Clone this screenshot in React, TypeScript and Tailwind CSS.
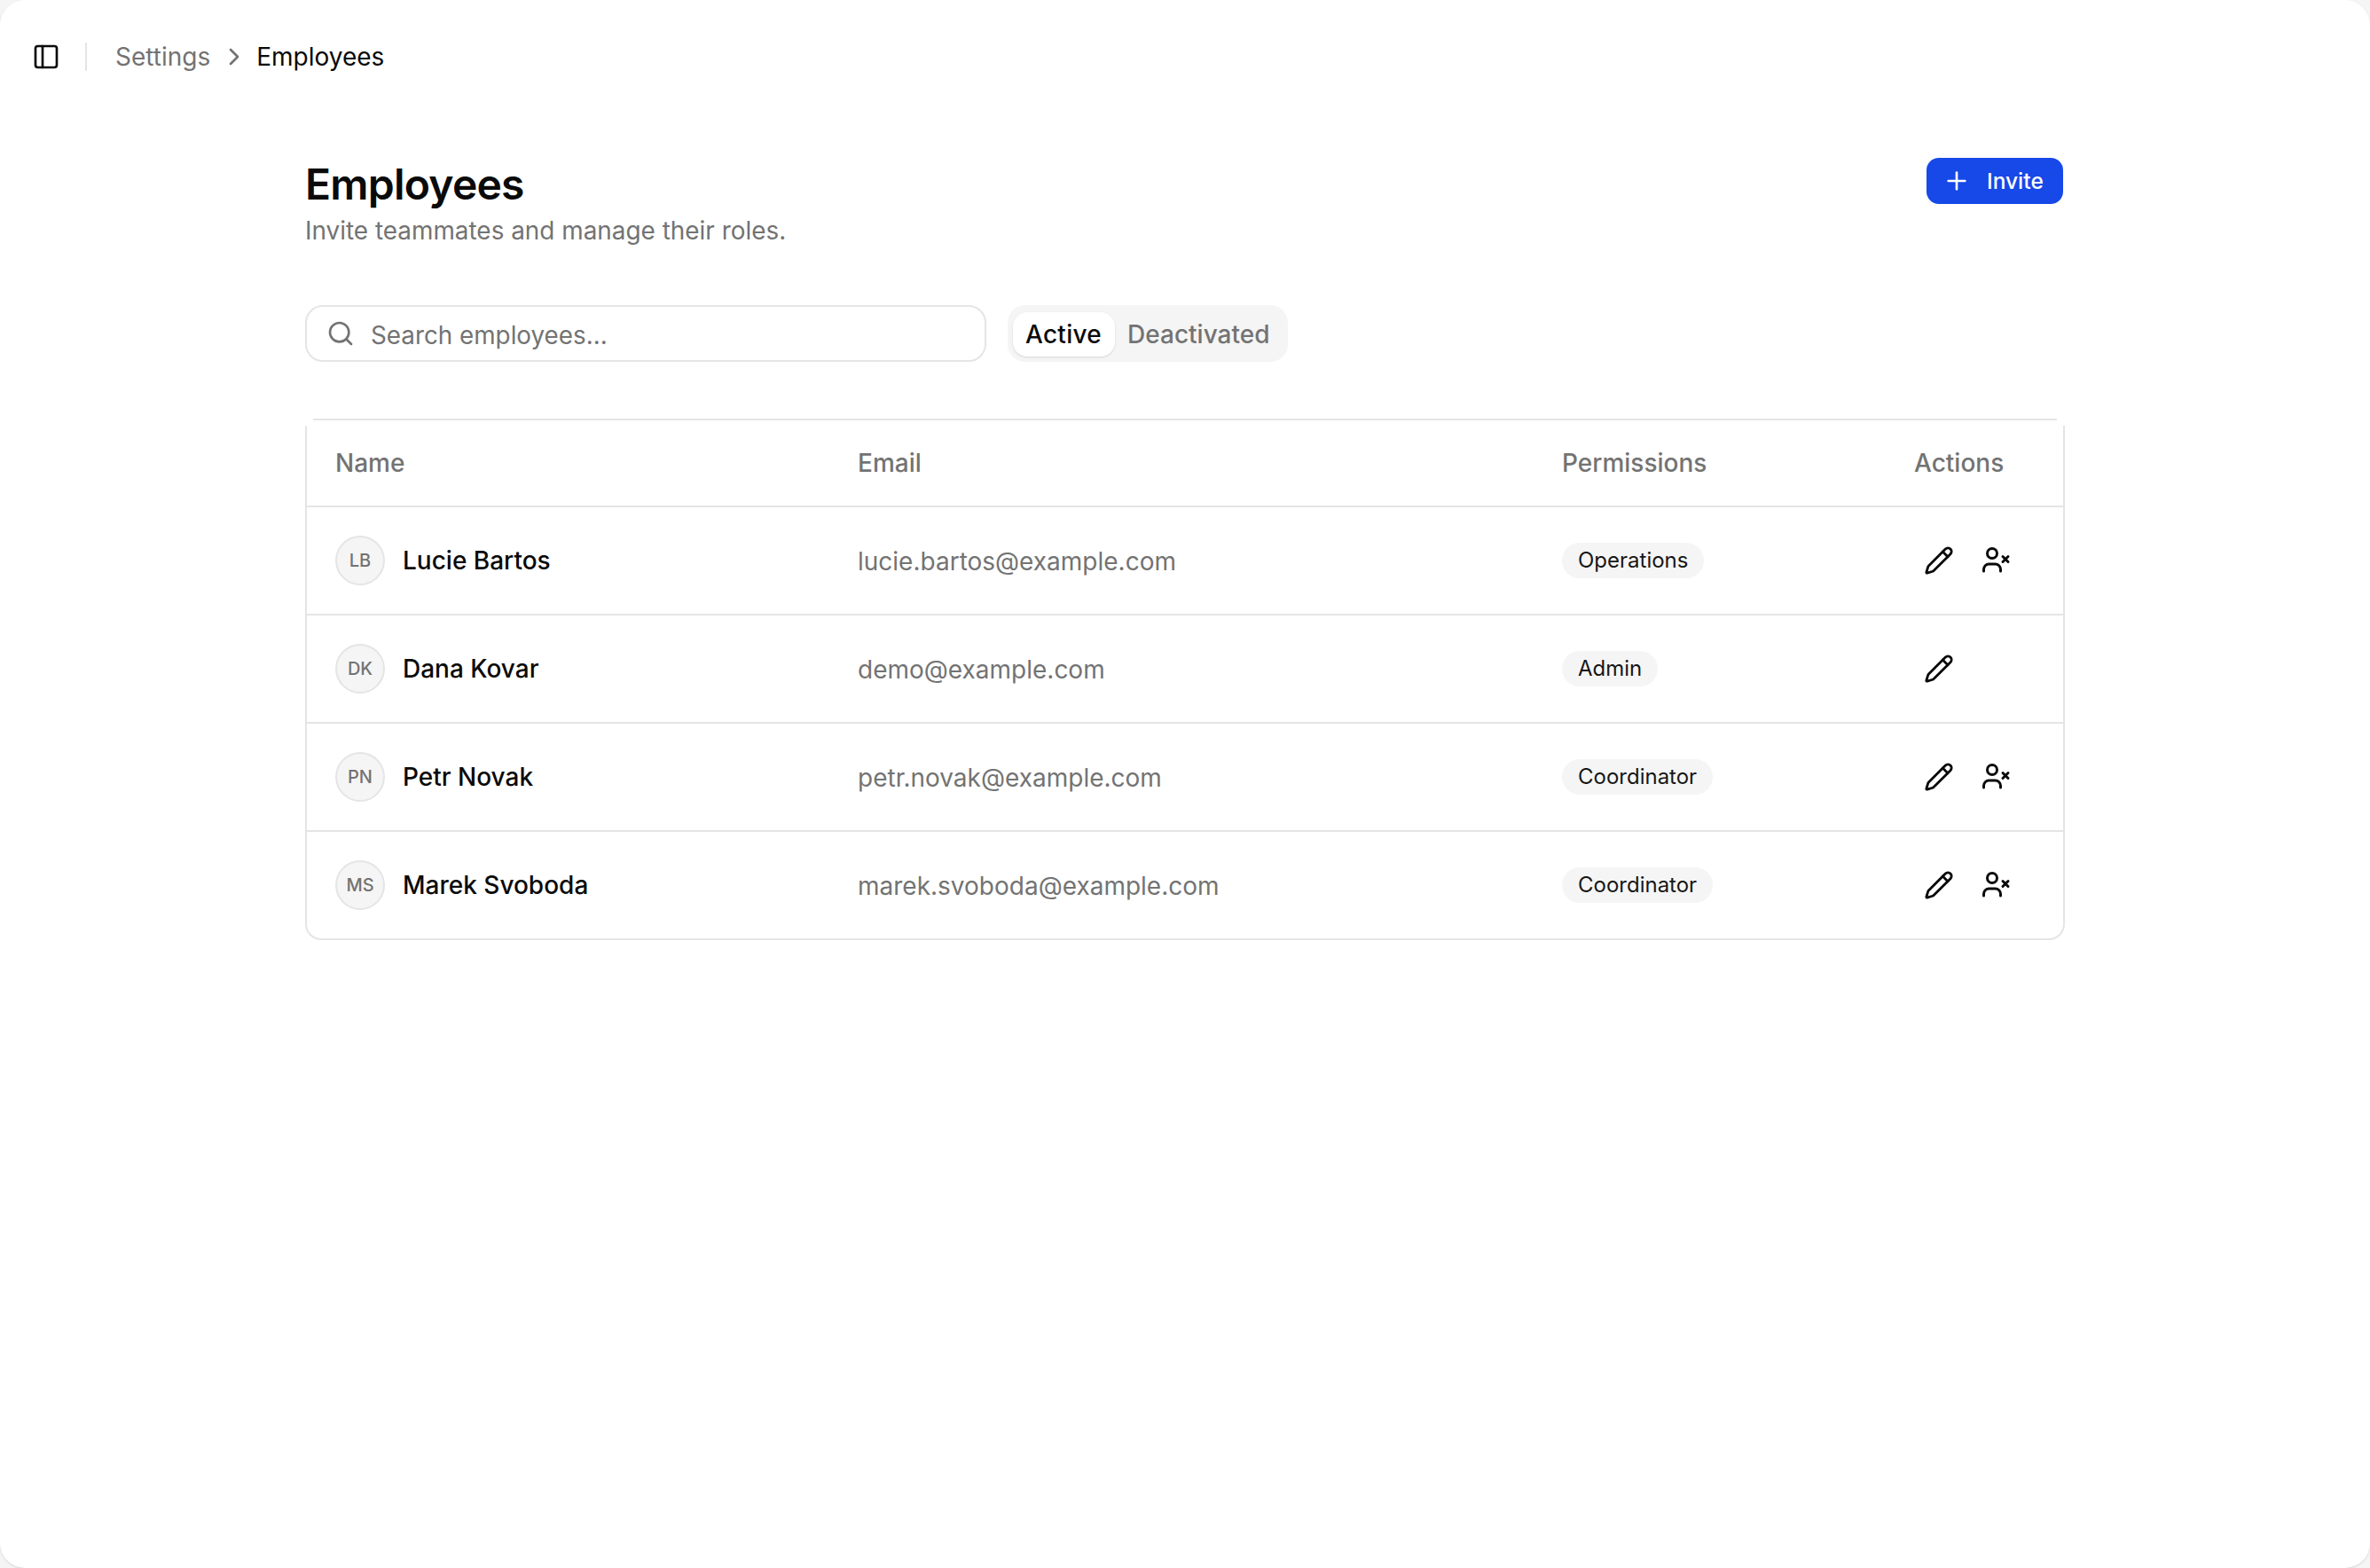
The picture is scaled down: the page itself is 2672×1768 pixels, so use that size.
import React from 'react';
import { ChevronRight, PanelLeft, Pencil, Plus, Search } from 'lucide-react';

const employees = [
  { initials: 'LB', name: 'Lucie Bartos', email: 'lucie.bartos@example.com', role: 'Operations', removable: true },
  { initials: 'DK', name: 'Dana Kovar', email: 'demo@example.com', role: 'Admin', removable: false },
  { initials: 'PN', name: 'Petr Novak', email: 'petr.novak@example.com', role: 'Coordinator', removable: true },
  { initials: 'MS', name: 'Marek Svoboda', email: 'marek.svoboda@example.com', role: 'Coordinator', removable: true },
];

function UserRemove() {
  return (
    <svg width="36" height="36" viewBox="0 0 36 36" fill="none" stroke="currentColor" strokeWidth="3" strokeLinecap="round" strokeLinejoin="round">
      <circle cx="14" cy="10" r="5.5" />
      <path d="M4.5 30v-2a6 6 0 0 1 6-6h7a6 6 0 0 1 6 6v2" />
      <path d="M26 13.5l6 6M32 13.5l-6 6" />
    </svg>
  );
}

function EmployeeRow({ employee, last }: any) {
  return (
    <div className={`grid grid-cols-[589px_794px_398px_1fr] items-center ${last ? 'h-[120px]' : 'h-[122px] border-b-2 border-[#e5e5e5]'}`}>
      <div className="flex items-center gap-5 pl-8">
        <div className="flex items-center justify-center w-14 h-14 rounded-full border-2 border-[#e5e5e5] bg-[#f5f5f5] text-[20px] font-medium text-[#737373]">
          {employee.initials}
        </div>
        <span className="text-[28px] font-[450] text-[#0a0a0a]">{employee.name}</span>
      </div>
      <div className="pl-8 pt-[1px] text-[28px] text-[#737373]">{employee.email}</div>
      <div className="pl-8">
        <span className="inline-flex items-center h-10 px-[18px] rounded-full bg-[#f5f5f5] text-[24px] font-[430] text-[#171717]">
          {employee.role}
        </span>
      </div>
      <div className="flex items-center gap-3 pl-[33px] text-[#0a0a0a]">
        <button className="flex items-center justify-center w-[52px] h-[52px]">
          <Pencil size={34} strokeWidth={2} />
        </button>
        {employee.removable && (
          <button className="flex items-center justify-center w-[52px] h-[52px]">
            <UserRemove />
          </button>
        )}
      </div>
    </div>
  );
}

export default function App() {
  return (
    <div className="min-h-[1768px] bg-[#f5f5f5] font-['Inter',sans-serif]">
      <div className="min-h-[1768px] bg-white rounded-[28px] shadow-sm">
        <header className="flex items-center h-[128px] pl-[36px]">
          <PanelLeft size={32} strokeWidth={2} className="text-[#0a0a0a]" />
          <div className="w-[2px] h-8 ml-[28px] mr-[32px] bg-[#e5e5e5]" />
          <span className="text-[28px] text-[#737373]">Settings</span>
          <ChevronRight size={32} strokeWidth={2} className="ml-[11px] mr-[9px] text-[#737373]" />
          <span className="text-[28px] text-[#0a0a0a]">Employees</span>
        </header>

        <main className="w-[1984px] mx-auto pt-[48px]">
          <div className="flex items-start justify-between">
            <div>
              <h1 className="text-[48px] leading-[64px] font-semibold tracking-[-0.016em] text-[#0a0a0a]">Employees</h1>
              <p className="text-[27.9px] leading-[40px] text-[#737373]">Invite teammates and manage their roles.</p>
            </div>
            <button className="flex items-center gap-[18px] h-[52px] w-[154px] pl-[18px] mt-[2px] mr-[2px] rounded-[14px] bg-[#1748e8] text-[24.5px] font-medium text-white">
              <Plus size={32} strokeWidth={2} />
              Invite
            </button>
          </div>

          <div className="flex items-center gap-6 mt-[64px]">
            <div className="flex items-center gap-[18px] w-[768px] h-[64px] pl-[22px] rounded-[20px] border-2 border-[#e5e5e5] text-[#737373]">
              <Search size={32} strokeWidth={2} />
              <input className="flex-1 pt-[6px] bg-transparent text-[27.8px] outline-none placeholder:text-[#737373]" placeholder="Search employees..." />
            </div>
            <div className="flex items-center w-[316px] h-[64px] pt-[2px] pl-[6px] rounded-[20px] bg-[#f5f5f5]">
              <div className="flex items-center h-[50px] pl-[14px] pr-[15px] rounded-[16px] bg-white shadow-sm text-[28px] font-medium tracking-[0.01em] text-[#0a0a0a]">Active</div>
              <div className="pl-[14px] text-[28px] font-medium text-[#737373]">Deactivated</div>
            </div>
          </div>

          <div className="relative mt-[64px] rounded-b-[18px] border-2 border-[#e5e5e5] bg-white">
            <div className="absolute -top-[2px] -left-[2px] w-[9px] h-[8px] bg-white" />
            <div className="absolute -top-[2px] -right-[2px] w-[9px] h-[8px] bg-white" />
            <div className="grid grid-cols-[589px_794px_398px_1fr] items-center h-[98px] border-b-2 border-[#e5e5e5] text-[28px] font-medium text-[#737373]">
              <div className="pl-8">Name</div>
              <div className="pl-8">Email</div>
              <div className="pl-8">Permissions</div>
              <div className="pl-[31px]">Actions</div>
            </div>
            {employees.map((employee, i) => (
              <EmployeeRow key={employee.email} employee={employee} last={i === employees.length - 1} />
            ))}
          </div>
        </main>
      </div>
    </div>
  );
}
